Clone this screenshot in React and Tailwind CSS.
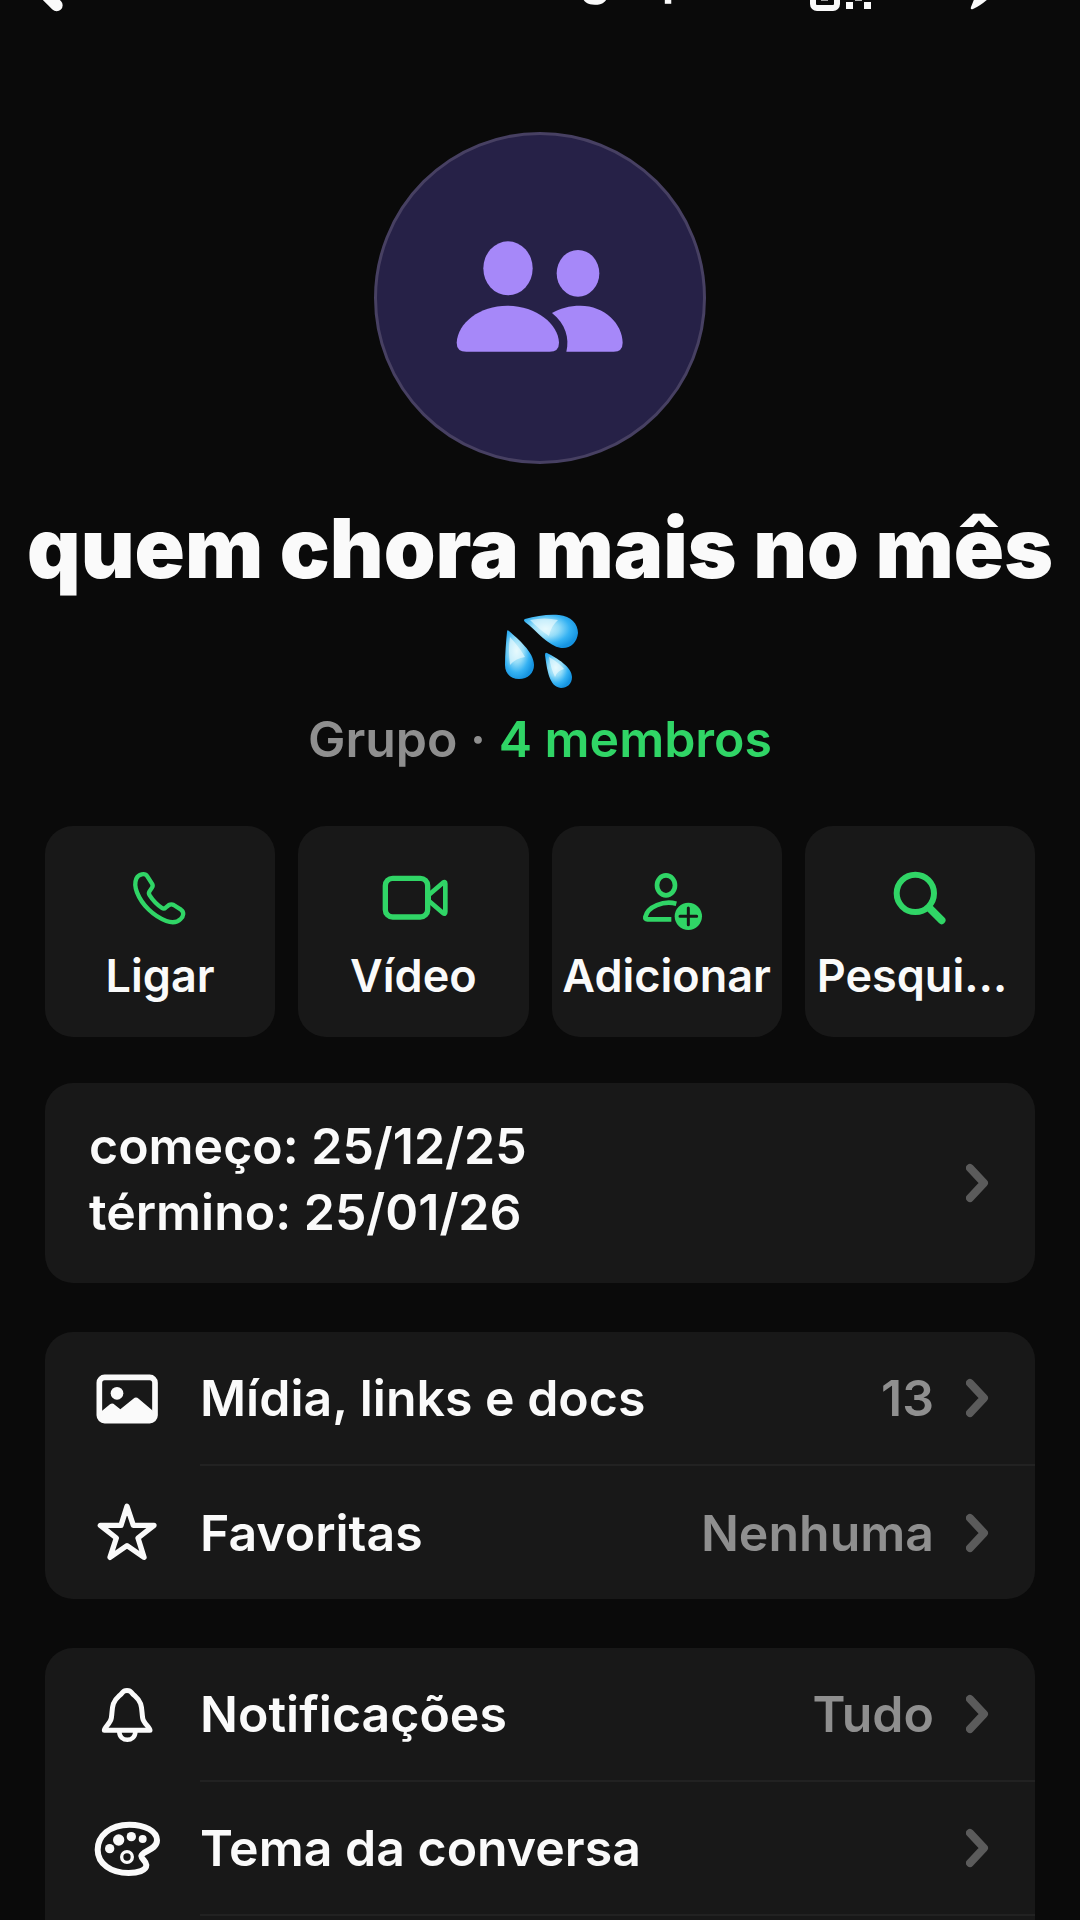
import React from 'react';

const BackIcon = () => (
  <svg viewBox="90 -192 120 240" className="h-20 w-10" fill="none" stroke="currentColor" strokeWidth="36" strokeLinecap="round" strokeLinejoin="round">
    <path d="M170 16 L98 -56 L170 -128" />
  </svg>
);

const QrIcon = () => (
  <svg viewBox="808 -64 64 80" className="h-20 w-16" fill="none" stroke="currentColor" strokeWidth="6">
    <rect x="813" y="-16" width="24" height="24" rx="4" />
    <rect x="813" y="-48" width="24" height="24" rx="4" />
    <rect x="845" y="-48" width="24" height="24" rx="4" />
    <g fill="currentColor" stroke="none">
      <rect x="821" y="-7" width="7" height="8" opacity="0.6" />
      <rect x="846" y="2" width="7" height="7" />
      <rect x="864" y="2" width="7" height="7" />
      <rect x="855" y="-7" width="7" height="8" opacity="0.7" />
      <rect x="846" y="-16" width="7" height="7" />
      <rect x="864" y="-16" width="7" height="7" />
    </g>
  </svg>
);

const PencilIcon = () => (
  <svg viewBox="968 -64 64 80" className="h-20 w-16" fill="currentColor">
    <path d="M971 7 L977 -8 L1016 -47 Q1021 -51 1026 -46 Q1031 -41 1026 -36 L988 -1 Q980 6 973 9 Q970 10 971 7 Z" />
  </svg>
);

const GroupIcon = () => (
  <svg viewBox="52 45 978 978" className="size-full" fill="currentColor">
    <ellipse cx="445" cy="445" rx="74" ry="81" />
    <ellipse cx="655" cy="460" rx="64" ry="70" />
    <path d="M291 668 C294 608 360 557 443 557 C530 557 596 612 598 668 Q598 695 570 695 H320 Q291 695 291 668 Z" />
    <path d="M577 579 C600 565 630 557 662 557 C735 557 789 612 789 668 Q789 695 762 695 H620 C630 655 618 612 577 579 Z" />
  </svg>
);

const SweatDrops = () => (
  <svg viewBox="502 612 76 76" className="size-19" role="img" aria-label="💦">
    <defs>
      <radialGradient id="drop" cx="0.4" cy="0.42" r="0.62">
        <stop offset="0" stopColor="#d9f6fc" />
        <stop offset="0.4" stopColor="#93dcf8" />
        <stop offset="0.72" stopColor="#35b2f3" />
        <stop offset="1" stopColor="#1593e0" />
      </radialGradient>
    </defs>
    <g fill="url(#drop)">
      <path d="M525 619 C536 616 548 614 559 615 C571 616 578 624 578 633 C577 643 570 649 561 648 C548 646 537 631 525 622 Q523 620 525 619 Z" />
      <path d="M509 631 C518 639 534 652 534 665 C534 673 528 679 519 679 C510 679 505 673 505 665 C505 654 506 642 507 632 Q507 629 509 631 Z" />
      <path d="M547 653 C557 658 572 667 572 677 C572 684 567 688 561 688 C549 687 547 669 545 655 Q545 652 547 653 Z" />
    </g>
    <g fill="#f1fdff" opacity="0.6">
      <path d="M530 620 Q545 617 558 620 Q551 626 549 636 Q540 630 530 620 Z" />
      <path d="M510 637 Q520 648 525 657 Q516 658 510 665 Q508 650 510 637 Z" />
      <path d="M549 657 Q558 662 564 669 Q557 671 555 677 Q551 669 549 657 Z" />
    </g>
  </svg>
);

const PhoneIcon = () => (
  <svg viewBox="259 133 204 204" className="size-17" fill="none" stroke="currentColor" strokeWidth="13" strokeLinejoin="round">
    <path d="M290 177 C296 163 316 159 323 170 L337 192 Q341 198 337 204 L329 216 Q326 221 330 227 C341 244 352 255 367 265 Q373 269 378 264 L388 256 Q395 252 402 256 L424 270 C434 277 432 290 423 298 C412 309 396 310 380 304 C341 289 307 256 292 218 C286 203 285 189 290 177 Z" />
  </svg>
);

const VideoIcon = () => (
  <svg viewBox="1018 133 204 204" className="size-17 overflow-visible" fill="none" stroke="currentColor" strokeWidth="16" strokeLinejoin="round">
    <rect x="1037" y="176" width="127" height="116" rx="22" />
    <path strokeWidth="14" d="M1167 226 L1210 189 Q1217 184 1217 192 V276 Q1217 286 1210 280 L1167 243 Z" />
  </svg>
);

const AddPersonIcon = () => (
  <svg viewBox="280 135 204 204" className="size-17 overflow-visible" fill="none" stroke="currentColor" strokeWidth="14" strokeLinecap="butt" strokeLinejoin="round">
    <ellipse cx="379" cy="199" rx="27" ry="30" />
    <path d="M410 254 C372 244 324 262 317 294 Q316 301 323 301 H395" />
    <circle cx="446" cy="292" r="41" fill="currentColor" stroke="none" />
    <path d="M446 267 V317 M421 292 H471" stroke="#181818" strokeWidth="9" strokeLinecap="round" />
  </svg>
);

const SearchIcon = () => (
  <svg viewBox="1039 133 204 204" className="size-17" fill="none" stroke="currentColor" strokeLinecap="round">
    <circle cx="1127" cy="221" r="56" strokeWidth="18" />
    <path d="M1170 266 L1206 302" strokeWidth="23" />
  </svg>
);

const MediaIcon = () => (
  <svg viewBox="158 134 204 204" className="size-17 shrink-0" fill="none" stroke="currentColor" strokeWidth="17" strokeLinejoin="round">
    <rect x="177" y="171" width="167" height="130" rx="16" />
    <circle cx="230" cy="219" r="19" fill="currentColor" stroke="none" />
    <path stroke="none" fill="currentColor" d="M180 276 L209 252 Q216 247 223 253 L240 267 L279 235 Q287 228 295 235 L342 275 V302 H180 Z" />
  </svg>
);

const StarIcon = () => (
  <svg viewBox="158 533 204 204" className="size-17 shrink-0" fill="none" stroke="currentColor" strokeWidth="16" strokeLinejoin="round">
    <path d="M260 555 L279 612 L341 612 L293 650 L311 708 L260 673 L209 708 L228 650 L180 612 L242 612 Z" />
  </svg>
);

const BellIcon = () => (
  <svg viewBox="158 120 204 204" className="size-17 shrink-0" fill="none" stroke="currentColor" strokeWidth="15" strokeLinejoin="round">
    <path d="M192 268 C192 257 211 248 213 231 C217 205 213 184 235 166 C243 160 244 158 246 155 C252 146 268 146 274 155 C276 158 277 160 285 166 C307 184 303 205 307 231 C309 248 329 257 329 268 Z" />
    <path d="M237 273 C238 304 284 304 285 273" strokeWidth="14" />
  </svg>
);

const PaletteIcon = () => (
  <svg viewBox="158 523 204 204" className="size-17 shrink-0" fill="none" stroke="currentColor" strokeWidth="18" strokeLinejoin="round">
    <path d="M267 552 C209 552 172 586 172 627 C172 669 212 697 265 697 C292 697 318 690 318 673 C317 661 304 656 303 646 C305 631 350 628 350 599 C350 571 314 552 267 552 Z" />
    <circle cx="260" cy="649" r="16" strokeWidth="10" />
    <g fill="currentColor" stroke="none">
      <circle cx="208" cy="624" r="14" />
      <circle cx="235" cy="598" r="17" />
      <circle cx="273" cy="588" r="14" />
      <circle cx="307" cy="595" r="12" />
    </g>
  </svg>
);

const Chevron = () => (
  <svg viewBox="0 0 24 40" className="h-10 w-6 shrink-0 text-[#5b5b5b]" fill="none" stroke="currentColor" strokeWidth="8" strokeLinecap="round" strokeLinejoin="round">
    <path d="M4 5 L18 20 L4 35" />
  </svg>
);

const actions = [
  { label: 'Ligar', icon: PhoneIcon },
  { label: 'Vídeo', icon: VideoIcon },
  { label: 'Adicionar', icon: AddPersonIcon },
  { label: 'Pesqui…', icon: SearchIcon, clipped: true },
];

const ActionButton = ({ label, icon: Icon, clipped }) => (
  <button className="flex min-w-0 flex-col items-center gap-4 rounded-[28px] bg-[#181818] px-3 pt-[38px] pb-[33px]">
    <span className="text-[#30d566]"><Icon /></span>
    <span className={clipped ? 'w-full whitespace-nowrap text-left text-[45px] leading-14' : 'whitespace-nowrap text-[45px] leading-14'}>
      {label}
    </span>
  </button>
);

const Row = ({ icon: Icon, label, value, last }) => (
  <li>
    <button className="flex w-full items-center gap-[39px] pl-12 text-left">
      <Icon />
      <span className={last ? 'flex h-[133px] flex-1 items-center pr-[45px]' : 'flex h-[134px] flex-1 items-center border-b-2 border-[#222222] pr-[45px]'}>
        <span className="flex-1">{label}</span>
        {value && <span className="mr-8 text-[#8f8f8f]">{value}</span>}
        <Chevron />
      </span>
    </button>
  </li>
);

const App = () => {
  return (
    <div className="h-screen overflow-hidden bg-[#0a0a0a] font-[Inter,sans-serif] text-[50px] leading-[66px] font-semibold text-[#fafafa]">
      <header className="-mt-16 grid h-20 grid-cols-[1fr_auto_1fr] items-center pr-12 pl-[30px]">
        <button aria-label="Voltar" className="justify-self-start"><BackIcon /></button>
        <h2>Dados do grupo</h2>
        <div className="flex justify-end gap-24">
          <button aria-label="Código QR"><QrIcon /></button>
          <button aria-label="Editar"><PencilIcon /></button>
        </div>
      </header>

      <main className="px-[45px] pt-[116px]">
        <section className="flex flex-col items-center">
          <div className="size-[332px] overflow-hidden rounded-full border-3 border-[#474062] bg-[#262147] text-[#a688f9]">
            <GroupIcon />
          </div>
          <h1 className="-mx-8 mt-[34px] flex flex-col items-center text-center text-[83px] leading-[100px] font-black">
            <span className="whitespace-nowrap">quem chora mais no mês</span>
            <span className="mt-[14px]"><SweatDrops /></span>
          </h1>
          <p className="mt-[18px] text-[#8f8f8f]">
            Grupo · <a href="#membros" className="text-[#30d566]">4 membros</a>
          </p>
        </section>

        <section className="mt-[54px] grid grid-cols-4 gap-[23px]">
          {actions.map((a) => (
            <ActionButton key={a.label} {...a} />
          ))}
        </section>

        <button className="mt-[46px] flex w-full items-center rounded-[28px] bg-[#181818] py-[34px] pr-[45px] pl-11 text-left">
          <span className="-mt-1 mb-1 flex-1">
            começo: 25/12/25
            <br />
            término: 25/01/26
          </span>
          <Chevron />
        </button>

        <ul className="mt-[49px] overflow-hidden rounded-[28px] bg-[#181818]">
          <Row icon={MediaIcon} label="Mídia, links e docs" value="13" />
          <Row icon={StarIcon} label="Favoritas" value="Nenhuma" last />
        </ul>

        <ul className="mt-[49px] overflow-hidden rounded-[28px] bg-[#181818] pb-12">
          <Row icon={BellIcon} label="Notificações" value="Tudo" />
          <Row icon={PaletteIcon} label="Tema da conversa" />
        </ul>
      </main>
    </div>
  );
};

export default App;
